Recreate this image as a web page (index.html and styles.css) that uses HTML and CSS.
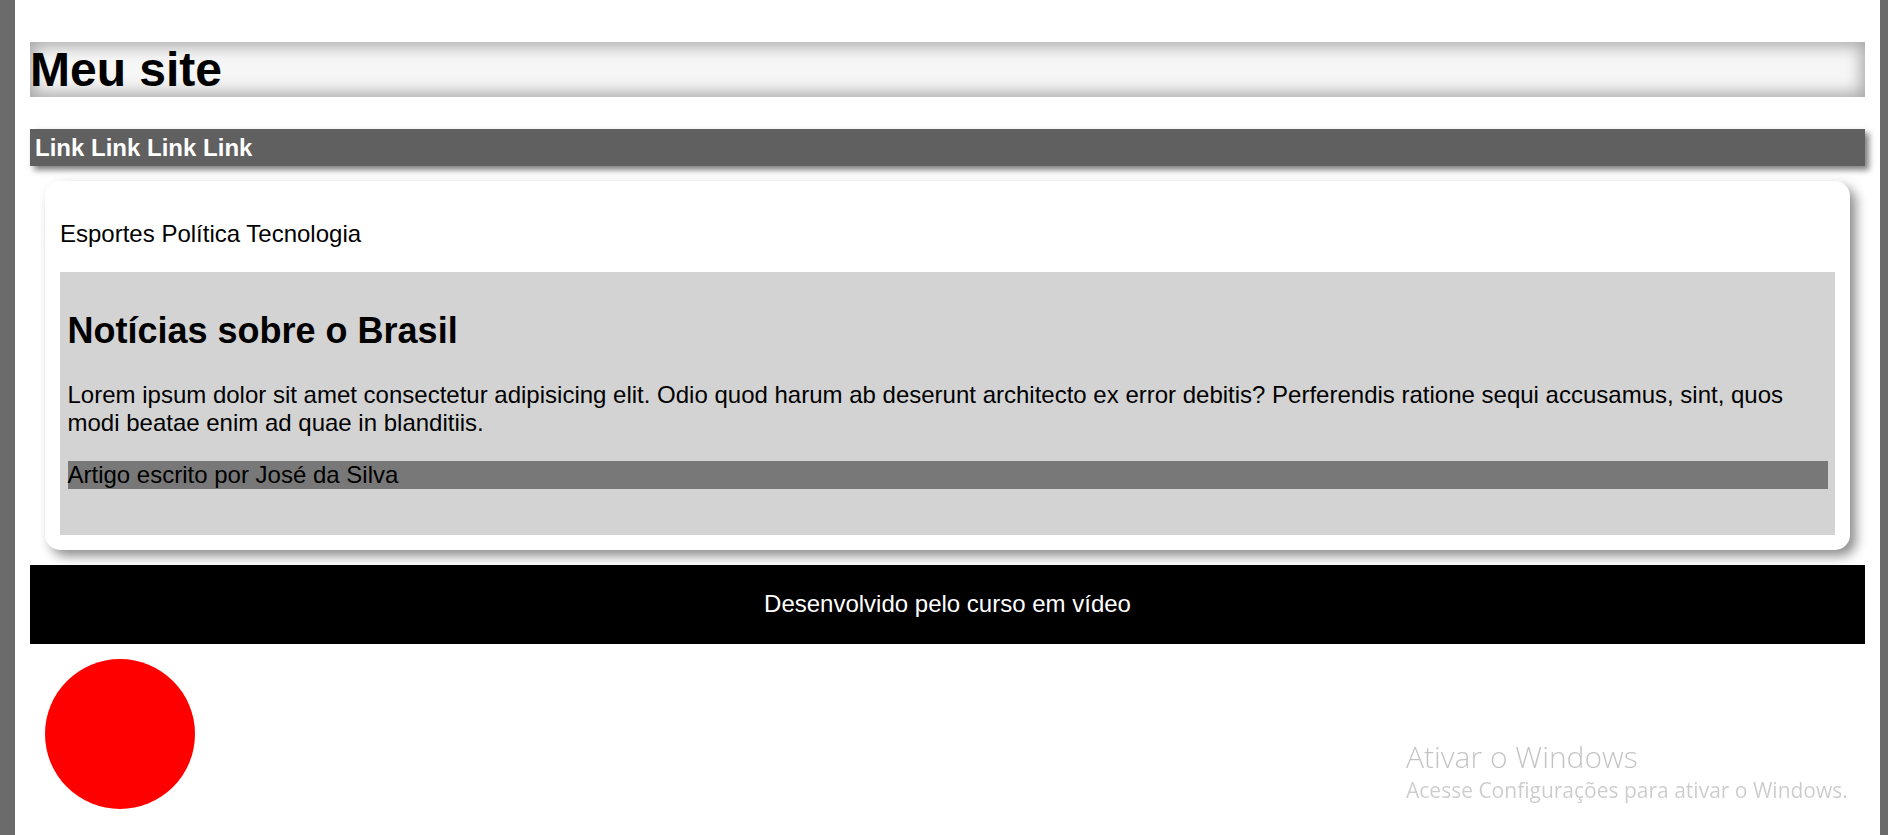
FILE: index.html
```html
<!DOCTYPE html>
<html lang="pt-BR">
<head>
<meta charset="utf-8">
<title>Meu site</title>
<link rel="stylesheet" href="styles.css">
</head>
<body>
  <header class="site-header">
    <h1 class="site-title">Meu site</h1>
  </header>
  <nav class="site-nav">
    <a class="nav-link" href="#">Link</a>
    <a class="nav-link" href="#">Link</a>
    <a class="nav-link" href="#">Link</a>
    <a class="nav-link" href="#">Link</a>
  </nav>
  <main class="card">
    <p class="topics">Esportes Política Tecnologia</p>
    <article class="article">
      <h2 class="article-title">Notícias sobre o Brasil</h2>
      <p class="article-text">Lorem ipsum dolor sit amet consectetur adipisicing elit. Odio quod harum ab deserunt architecto ex error debitis? Perferendis ratione sequi accusamus, sint, quos modi beatae enim ad quae in blanditiis.</p>
      <p class="author">Artigo escrito por José da Silva</p>
    </article>
  </main>
  <footer class="site-footer">Desenvolvido pelo curso em vídeo</footer>
  <div class="circle"></div>
  <div class="watermark">
    <div class="wm-title">Ativar o Windows</div>
    <div class="wm-sub">Acesse Configurações para ativar o Windows.</div>
  </div>
</body>
</html>
```

FILE: styles.css
```css
html {
  background: #6b6b6b;
  height: 100%;
}
body {
  margin: 0 8px 0 15px;
  padding: 42px 15px 0 15px;
  background: #ffffff;
  min-height: 100%;
  box-sizing: border-box;
  font-family: "Liberation Sans", Arial, sans-serif;
  font-size: 24px;
  color: #000;
}
.site-header {
  height: 55px;
  background: #f6f6f6;
  box-shadow: inset 0 0 16px 4px rgba(0, 0, 0, 0.32);
}
.site-title {
  margin: 0;
  font-size: 48px;
  font-weight: bold;
  line-height: 55px;
}
.site-nav {
  margin-top: 32px;
  padding: 5px 5px 4px 5px;
  background: #606060;
  box-shadow: 4px 4px 6px rgba(0, 0, 0, 0.5);
  line-height: 28px;
}
.nav-link {
  color: #ffffff;
  font-weight: bold;
  text-decoration: none;
}
.card {
  display: block;
  margin: 15px 15px 0 15px;
  padding: 15px;
  background: #ffffff;
  border-radius: 15px;
  box-shadow: 6px 6px 12px rgba(0, 0, 0, 0.45);
}
.topics {
  margin: 24px 0;
  line-height: 28px;
}
.article {
  display: block;
  background: #d3d3d3;
  padding: 7.5px 7.5px 22px 7.5px;
}
.article-title {
  font-size: 36px;
  font-weight: bold;
  margin: 30px 0;
  line-height: 41px;
}
.article-text {
  margin: 24px 0;
  line-height: 28px;
}
.author {
  margin: 24px 0;
  background: #787878;
  line-height: 28px;
}
.site-footer {
  margin-top: 15px;
  height: 79px;
  background: #000000;
  color: #ffffff;
  display: flex;
  align-items: center;
  justify-content: center;
}
.circle {
  margin: 15px 0 0 15px;
  width: 150px;
  height: 150px;
  border-radius: 50%;
  background: #ff0000;
}
.watermark {
  position: fixed;
  left: 1406px;
  top: 738px;
  font-family: "Open Sans", "Noto Sans", sans-serif;
  color: rgba(0, 0, 0, 0.24);
  pointer-events: none;
}
.wm-title {
  font-size: 30px;
  font-weight: 300;
  line-height: 38px;
}
.wm-sub {
  font-size: 21px;
  font-weight: 400;
  line-height: 28px;
  color: rgba(0, 0, 0, 0.2);
}
```
